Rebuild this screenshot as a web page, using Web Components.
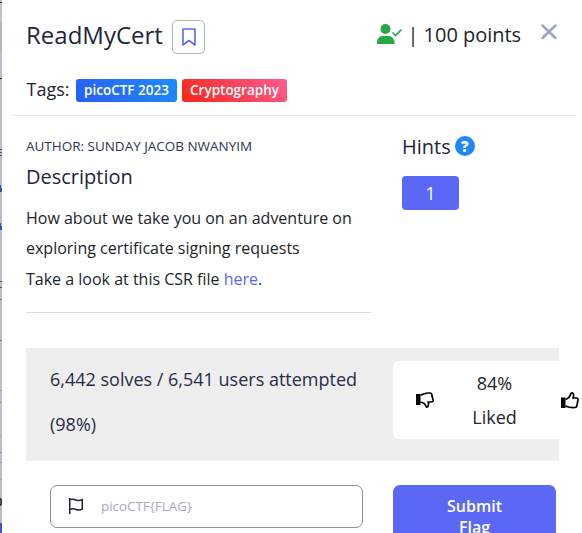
<!DOCTYPE html>
<html lang="en"><head><meta charset="utf-8"><title>ReadMyCert</title>
<style>
html,body{margin:0;height:533px;overflow:hidden;background:#fff}
body{font-family:"Open Sans","Noto Sans",sans-serif;color:#212529}
</style></head><body>
<challenge-dialog></challenge-dialog>
<script>
const define=(name,html)=>customElements.define(name,class extends HTMLElement{
  constructor(){super();this.attachShadow({mode:'open'}).innerHTML=html;}
});
define('page-edge',`<style>:host{display:block;width:2px;height:533px}svg{display:block}</style>
<svg width="2" height="533" shape-rendering="crispEdges"><rect width="2" height="533" fill="#bebdc5"/><rect width="2" height="22" fill="#c3c2c4"/><rect y="22" width="2" height="30" fill="#b5b5c4"/>
<path d="M0 2.5h2M0 78.500h2" stroke="#292748"/><path d="M0 149.500h2M0 152.500h2M0 155.500h2M0 281.500h2M0 287.500h2" stroke="#51517d"/>
<path d="M0 299.500h2M0 340.500h2" stroke="#77778a"/><path d="M0 435.500h2M0 479.500h2" stroke="#aaaab4"/>
<path d="M0 185h1v3h1v4h-2zM0 223h1v3h1v4h-2z" fill="#345a9d"/><path d="M0 390.500h1M0 402.500h1M0 452.500h1M0 462.500h1" stroke="#4d8cc9"/>
<path d="M0 498h1v1h1v6h-1v1h-1z" fill="#263659"/><path d="M0 500h1v4h-1z" fill="#994329"/><path d="M0 523h2v10h-2z" fill="#464fc4"/></svg>`);
define('bookmark-button',`<style>:host{box-sizing:border-box;display:flex;width:33px;height:34px;border:1px solid #adb5bd;border-radius:5px;align-items:center;justify-content:center}</style>
<svg width="14" height="18" viewBox="0 0 14 18" fill="none" stroke="#5b68f5" stroke-width="1.600" stroke-linejoin="round"><path d="M1 1h12v16L7 12.500 1 17z"/></svg>`);
define('tag-badge',`<style>:host{box-sizing:border-box;display:block;height:23px;border-radius:3px;color:#fff;font-size:13.500px;font-weight:600;line-height:22px;text-align:center;white-space:nowrap}
:host([kind=event]){width:101px;background:linear-gradient(45deg,#2b5cf6,#1c8dfa)}:host([kind=topic]){width:105px;background:linear-gradient(45deg,#f52718,#ff5c91)}</style><slot></slot>`);
define('dialog-header',`<style>:host{box-sizing:border-box;display:block;height:116px;margin-left:9px;width:563px;border-bottom:1px solid #e6e6e8;padding:18px 0 0 15px}
:host{margin-left:10px;padding-left:14px}
.top{display:flex;height:37px}.title{font-size:24px;line-height:34px;width:146px;color:#1e263c;white-space:nowrap}bookmark-button{margin-top:2px}
.points{display:flex;margin-left:171px;width:165px;font-size:20px;line-height:33px;letter-spacing:-.03px;white-space:nowrap}.points svg{margin:6px 5.500px 0 0;flex:none}.close{margin-top:6px}
.tags{display:flex;margin-top:24px;align-items:flex-start}.label{box-sizing:border-box;padding-left:.6px;width:50px;font-size:18px;line-height:20px}tag-badge{margin-right:5px}</style>
<div class="top"><div class="title">ReadMyCert</div><bookmark-button></bookmark-button>
<div class="points"><svg width="26" height="21" viewBox="0 0 26 21" fill="#28a745"><circle cx="9.500" cy="5" r="5"/><path d="M1 20v-1.500C1 14.500 3.500 12 7 12h5c3.500 0 6.500 2.500 6.500 6.500V20z"/><path d="m17 9 2.500 2.500 5.300-5.300" fill="none" stroke="#28a745" stroke-width="1.700" stroke-linecap="round"/></svg><span>| 100 points</span></div>
<svg class="close" width="16" height="16" viewBox="0 0 16 16" stroke="#9aa4c3" stroke-width="2.500" stroke-linecap="round"><path d="m1.500 1.500 13 12.500m0-12.500-13 12.500"/></svg></div>
<div class="tags"><span class="label">Tags:</span><tag-badge kind="event">picoCTF 2023</tag-badge><tag-badge kind="topic">Cryptography</tag-badge></div>`);
define('challenge-description',`<style>:host{display:block;box-sizing:border-box;width:345px;height:197px;border-bottom:1px solid #dedede}
.author{font-size:13.480px;line-height:20px;padding-top:20px;color:#2c3452;white-space:nowrap}.heading{font-size:20px;line-height:30px;margin-top:6px;color:#1e263c}
.copy{font-size:16px;line-height:30.400px;margin-top:11px;white-space:nowrap}a{color:#5b68f5;text-decoration:none}</style>
<div class="author">AUTHOR: SUNDAY JACOB NWANYIM</div><div class="heading">Description</div>
<div class="copy">How about we take you on an adventure on<br>exploring certificate signing requests<br>Take a look at this CSR file <a>here</a>.</div>`);
define('hint-panel',`<style>:host{display:block;padding-top:20px}.h{display:flex;gap:4px;font-size:20px;line-height:22px;color:#1e263c}.q{display:block;width:20px;height:20px;border-radius:50%;background:#1e88fa;color:#fff;font-size:15px;font-weight:800;line-height:20px;text-align:center}
.num{width:57px;height:34px;margin-top:18px;border-radius:4px;background:#5b68f5;color:#fff;font-size:17.500px;font-weight:500;line-height:34px;text-align:center}</style>
<div class="h"><span class="t">Hints</span><span class="q">?</span></div><div class="num">1</div>`);
define('like-panel',`<style>:host{box-sizing:border-box;display:flex;width:188px;height:78px;background:#fff;border-radius:5px;padding-left:23px}.down{margin-top:31px}.up{margin-top:31px}svg{flex:none}
.rate{width:121px;text-align:center;font-size:18px;line-height:34px;padding-top:5px;margin-right:6px}</style>
<svg class="down" width="18" height="18" viewBox="0 0 18 18"><path d="M0 2h4.500v11H0z"/><path d="M4.500 3C7.500 2.500 9 1 12 1h2q2 0 2 3l1.200 4.500q0 1.500-2 1.500h-3q.8 3-.5 4.800-1.500.8-2-1C9 11.500 7 10.500 4.500 10" fill="none" stroke="#000" stroke-width="1.700"/></svg>
<div class="rate">84%<br>Liked</div><svg class="up" width="18" height="18" viewBox="0 0 18 18"><path d="M0 5.500h4.500v10.500H0z"/><path d="M4.500 7.500C7 6.500 9 5 9.500 2.500q.5-2 2-1.500Q13.500 2 12 6h3.500q1.800.3 1.500 2L16 13q-.2 2.500-2 2.500-5 .5-9.500-1.500" fill="none" stroke="#000" stroke-width="1.700"/></svg>`);
define('solve-stats',`<style>:host{box-sizing:border-box;display:flex;width:533px;height:113px;background:#eee;padding:13px 0 0 24px}.s{flex:none;width:343px;font-size:18px;line-height:45px;margin-top:-4px;color:#262d49}like-panel{flex:none}</style>
<div class="s">6,442 solves / 6,541 users attempted<br>(98%)</div><like-panel></like-panel>`);
define('flag-input',`<style>:host{box-sizing:border-box;display:flex;width:313px;height:43px;border:1px solid #9091a0;border-radius:7px;align-items:center;padding-left:17px;gap:16px;color:#a9abb8;font-size:13.400px;line-height:18px}span{padding-bottom:1px}</style>
<svg width="17" height="17" viewBox="0 0 17 17" fill="none" stroke="#1e263c" stroke-width="1.500"><path d="M1.750 0v16M2 1.500q3-.8 6 .5t6.250-.3v9.500q-3 1.500-6 .3T2 11.300"/></svg><span><slot></slot></span>`);
define('submit-button',`<style>:host{box-sizing:border-box;display:block;width:163px;height:60px;background:#5b68f5;border-radius:7px 7px 0 0;color:#fff;text-align:center;font-size:16px;font-weight:600;line-height:21px;padding-top:11px}</style><slot></slot>`);
define('challenge-dialog',`<style>:host{display:grid;grid-template-columns:2px 1fr;height:533px;overflow:hidden}main{min-width:0;height:533px;overflow:hidden}.body{display:grid;grid-template-columns:345px 1fr;column-gap:31px;margin-left:24px}.stats{margin:35px 0 0 24px}.entry{display:flex;gap:30px;margin:24px 0 0 48px}</style>
<page-edge></page-edge><main><dialog-header></dialog-header><div class="body"><challenge-description></challenge-description><hint-panel></hint-panel></div>
<div class="stats"><solve-stats></solve-stats></div><div class="entry"><flag-input>picoCTF{FLAG}</flag-input><submit-button>Submit<br>Flag</submit-button></div></main>`);
</script></body></html>
